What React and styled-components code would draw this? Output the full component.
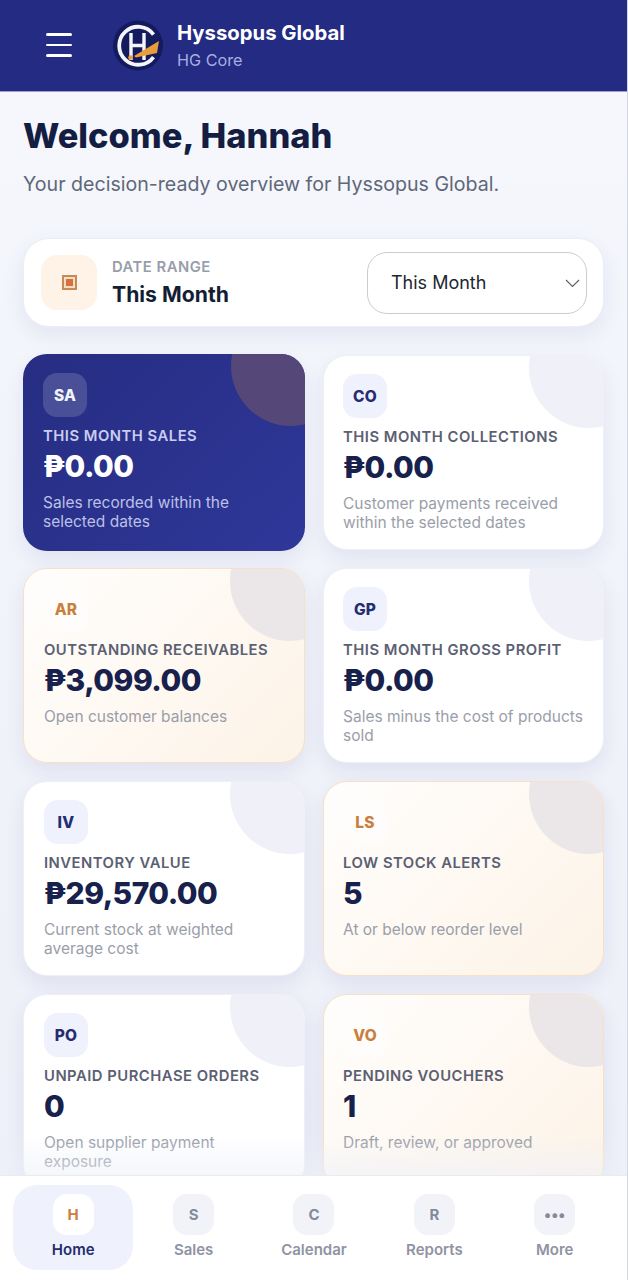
import React from "react";
import styled, { createGlobalStyle } from "styled-components";

const Global = createGlobalStyle`
  html, body { margin: 0; padding: 0; background: #f5f7fc; }
  * { box-sizing: border-box; }
  body { font-family: Inter, "Liberation Sans", sans-serif; overflow: hidden; }
`;

const Shell = styled.div`
  position: relative;
  width: 628px;
  height: 1280px;
  overflow: hidden;
  display: flex;
  flex-direction: column;
  background: linear-gradient(180deg, #f6f8fd 0%, #eff2f9 60%, #edf0f8 100%);
  border-right: 1px solid #d5d8e2;
`;

const Header = styled.header`
  flex: none;
  height: 92px;
  background: #242b83;
  border-bottom: 1px solid #9ea2c8;
  display: flex;
  align-items: center;
  padding: 0 0 0 46px;
`;

const MenuButton = styled.div`
  width: 26px;
  display: flex;
  flex-direction: column;
  gap: 8px;
  margin-right: 40px;
  margin-top: -1px;
  span { display: block; height: 2.6px; border-radius: 2px; background: #fff; }
`;

const Brand = styled.div`
  display: flex;
  flex-direction: column;
  margin-left: 13px;
`;

const BrandName = styled.div`
  font-size: 20.3px;
  line-height: 28px;
  font-weight: 700;
  color: #fff;
`;

const BrandSub = styled.div`
  font-size: 16.2px;
  line-height: 24px;
  margin-top: 1px;
  color: #a9aee0;
`;

const Main = styled.main`
  flex: 1;
  padding: 0 23px;
  min-height: 0;
`;

const Title = styled.h1`
  margin: 24px 0 0;
  font-size: 34.4px;
  line-height: 40px;
  font-weight: 800;
  color: #141d42;
`;

const Lead = styled.p`
  margin: 15px 0 0;
  font-size: 19.6px;
  line-height: 26px;
  color: #5f6779;
`;

const RangePanel = styled.section`
  margin-top: 41px;
  height: 89px;
  border-radius: 26px;
  background: #fff;
  border: 1px solid #eceef5;
  box-shadow: 0 8px 22px rgba(36, 43, 131, 0.08);
  display: flex;
  align-items: center;
  padding: 0 16px 0 17px;
`;

const RangeIcon = styled.div`
  width: 56px;
  height: 55px;
  border-radius: 16px;
  background: #fef3e6;
  display: flex;
  align-items: center;
  justify-content: center;
  div {
    width: 15px;
    height: 15px;
    border: 2px solid #c58a57;
    background: #f2ddc8;
    display: flex;
    align-items: center;
    justify-content: center;
  }
  i { display: block; width: 7px; height: 7px; background: #d9703a; }
`;

const RangeText = styled.div`
  margin-left: 15px;
  flex: 1;
`;

const RangeLabel = styled.div`
  font-size: 14.8px;
  line-height: 18px;
  margin-top: 1px;
  font-weight: 600;
  letter-spacing: 0.5px;
  color: #989daa;
`;

const RangeValue = styled.div`
  font-size: 21.2px;
  line-height: 28px;
  margin-top: 4px;
  font-weight: 700;
  color: #141d33;
`;

const Select = styled.div`
  width: 220px;
  height: 62px;
  border-radius: 20px;
  border: 1px solid #c9ccd3;
  background: #fff;
  display: flex;
  align-items: center;
  justify-content: space-between;
  padding: 0 5px 0 23px;
  font-size: 18px;
  color: #22262f;
`;

const Grid = styled.div`
  margin-top: 28px;
  display: grid;
  grid-template-columns: 282px 281px;
  grid-auto-rows: 195px;
  gap: 18px;
`;

const Card = styled.article`
  position: relative;
  overflow: hidden;
  border-radius: 24px;
  padding: 18px 19px 0;
  background: ${(p) =>
    p.$tone === "warm" ? "linear-gradient(135deg, #fffefd 0%, #fdf3e7 100%)" : "#fff"};
  background-origin: border-box;
  border: ${(p) => (p.$tone === "warm" ? "1.5px solid #f7e0c5" : "1px solid #eef0f6")};
  box-shadow: 0 8px 20px rgba(36, 43, 131, 0.08);
  &:nth-child(odd) { padding-left: 20px; }
  &::before {
    content: "";
    position: absolute;
    width: 120px;
    height: 120px;
    top: -48px;
    right: -46px;
    border-radius: 50%;
    background: ${(p) => (p.$tone === "warm" ? "#ebe7e8" : "#eff0f8")};
  }
`;

const PrimaryCard = styled(Card)`
  margin: -1px 0;
  border: none;
  background: linear-gradient(135deg, #262d82 0%, #2f3799 100%);
  &:nth-child(odd) { padding: 19px 20px 0; }
  &::before { background: #554878; }
`;

const Badge = styled.div`
  position: relative;
  width: 44px;
  height: 44px;
  border-radius: 14px;
  display: flex;
  align-items: center;
  justify-content: center;
  font-size: 15.5px;
  font-weight: 800;
  letter-spacing: 0.2px;
  background: ${(p) =>
    p.$tone === "primary" ? "#4a5098" : p.$tone === "warm" ? "#fffdfb" : "#eff1fd"};
  color: ${(p) =>
    p.$tone === "primary" ? "#f2f3fb" : p.$tone === "warm" ? "#c9803f" : "#252c70"};
`;

const CardLabel = styled.div`
  position: relative;
  margin-top: 10px;
  font-size: 14.8px;
  line-height: 18px;
  font-weight: 600;
  letter-spacing: 0.5px;
  white-space: nowrap;
  color: ${(p) => (p.$tone === "primary" ? "#c9cdef" : "#5b6072")};
`;

const CardValue = styled.div`
  position: relative;
  margin-top: 1px;
  font-size: 30px;
  line-height: 40px;
  font-weight: 800;
  letter-spacing: -0.5px;
  color: ${(p) => (p.$tone === "primary" ? "#fff" : "#17214c")};
`;

const CardNote = styled.p`
  position: relative;
  margin: 7px 0 0;
  font-size: 15.5px;
  line-height: 19px;
  color: ${(p) => (p.$tone === "primary" ? "#bcc0e6" : "#9a9ea9")};
`;

const Fade = styled.div`
  position: absolute;
  left: 0;
  right: 0;
  bottom: 105px;
  height: 40px;
  background: linear-gradient(180deg, rgba(237, 240, 248, 0), rgba(237, 240, 248, 0.55));
`;

const Nav = styled.nav`
  position: absolute;
  left: 0;
  right: 0;
  bottom: 0;
  height: 105px;
  background: #fff;
  border-top: 1px solid #e9ebf2;
  display: grid;
  grid-template-columns: repeat(5, 120.4px);
  padding: 9px 0 10px 13px;
`;

const NavItem = styled.div`
  border-radius: 24px;
  background: ${(p) => (p.$active ? "#eff2fd" : "transparent")};
  display: flex;
  flex-direction: column;
  align-items: center;
  padding-top: 9px;
`;

const NavIcon = styled.div`
  width: 41px;
  height: 41px;
  border-radius: 14px;
  display: flex;
  align-items: center;
  justify-content: center;
  font-size: 15px;
  font-weight: 700;
  background: ${(p) => (p.$active ? "#fff" : "#f2f3f9")};
  color: ${(p) => (p.$active ? "#c9803f" : "#858a99")};
`;

const NavLabel = styled.div`
  margin-top: 6px;
  font-size: 15px;
  line-height: 18px;
  font-weight: 600;
  color: ${(p) => (p.$active ? "#252c70" : "#8f93a3")};
`;

const Logo = () => (
  <svg width="52" height="52" viewBox="0 0 52 52" aria-hidden="true">
    <circle cx="26" cy="25.5" r="25" fill="#141a5e" />
    <path d="M41.5 14.5 A 19 19 0 1 0 41.5 37" fill="none" stroke="#f4f5f9" strokeWidth="3.8" />
    <path d="M19 13v27M32 13v27M19 25.5h13" fill="none" stroke="#f4f5f9" strokeWidth="3.4" />
    <path d="M22 36 L 47 21 L 45 33 L 24 37.5 Z" fill="#ea9b3a" />
    <circle cx="18.5" cy="37.5" r="2.3" fill="#ea9b3a" />
  </svg>
);

const Chevron = () => (
  <svg width="17" height="16" viewBox="0 0 17 16" fill="none" stroke="#5a5e68" strokeWidth="1.1" aria-hidden="true">
    <path d="M2 5l6.5 6.5L15 5" />
  </svg>
);

const cards = [
  { code: "SA", label: "THIS MONTH SALES", value: "₱0.00", note: "Sales recorded within the selected dates", tone: "primary" },
  { code: "CO", label: "THIS MONTH COLLECTIONS", value: "₱0.00", note: "Customer payments received within the selected dates" },
  { code: "AR", label: "OUTSTANDING RECEIVABLES", value: "₱3,099.00", note: "Open customer balances", tone: "warm" },
  { code: "GP", label: "THIS MONTH GROSS PROFIT", value: "₱0.00", note: "Sales minus the cost of products sold" },
  { code: "IV", label: "INVENTORY VALUE", value: "₱29,570.00", note: "Current stock at weighted average cost" },
  { code: "LS", label: "LOW STOCK ALERTS", value: "5", note: "At or below reorder level", tone: "warm" },
  { code: "PO", label: "UNPAID PURCHASE ORDERS", value: "0", note: "Open supplier payment exposure" },
  { code: "VO", label: "PENDING VOUCHERS", value: "1", note: "Draft, review, or approved", tone: "warm" },
];

const navItems = [
  { glyph: "H", label: "Home", active: true },
  { glyph: "S", label: "Sales" },
  { glyph: "C", label: "Calendar" },
  { glyph: "R", label: "Reports" },
  { glyph: "•••", label: "More" },
];

export default function App() {
  return (
    <Shell>
      <Global />
      <Header>
        <MenuButton>
          <span />
          <span />
          <span />
        </MenuButton>
        <Logo />
        <Brand>
          <BrandName>Hyssopus Global</BrandName>
          <BrandSub>HG Core</BrandSub>
        </Brand>
      </Header>
      <Main>
        <Title>Welcome, Hannah</Title>
        <Lead>Your decision-ready overview for Hyssopus Global.</Lead>
        <RangePanel>
          <RangeIcon>
            <div>
              <i />
            </div>
          </RangeIcon>
          <RangeText>
            <RangeLabel>DATE RANGE</RangeLabel>
            <RangeValue>This Month</RangeValue>
          </RangeText>
          <Select>
            This Month
            <Chevron />
          </Select>
        </RangePanel>
        <Grid>
          {cards.map((c) => {
            const Frame = c.tone === "primary" ? PrimaryCard : Card;
            return (
              <Frame key={c.code} $tone={c.tone}>
                <Badge $tone={c.tone}>{c.code}</Badge>
                <CardLabel $tone={c.tone}>{c.label}</CardLabel>
                <CardValue $tone={c.tone}>{c.value}</CardValue>
                <CardNote $tone={c.tone}>{c.note}</CardNote>
              </Frame>
            );
          })}
        </Grid>
      </Main>
      <Fade />
      <Nav>
        {navItems.map((n) => (
          <NavItem key={n.label} $active={n.active}>
            <NavIcon $active={n.active}>{n.glyph}</NavIcon>
            <NavLabel $active={n.active}>{n.label}</NavLabel>
          </NavItem>
        ))}
      </Nav>
    </Shell>
  );
}
